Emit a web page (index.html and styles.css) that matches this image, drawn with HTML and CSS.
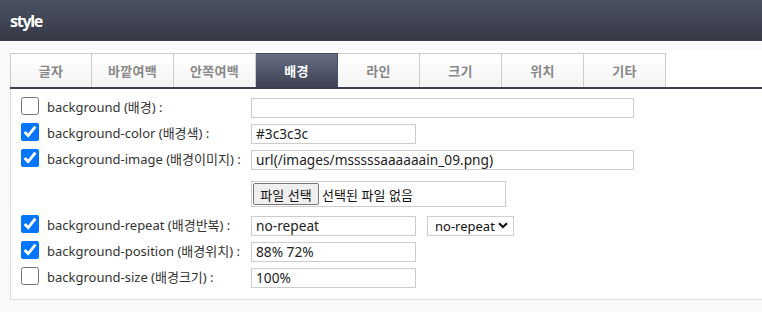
FILE: index.html
```html
<!DOCTYPE html>
<html lang="ko">
<head>
    <meta charset="UTF-8">
    <meta name="viewport" content="width=device-width, initial-scale=1.0">
    <title>style</title>
    <link rel="stylesheet" href="styles.css">
</head>
<body>
    <header class="top">
        <h1>style</h1>
    </header>

    <div class="wrap">
        <div class="box">
            <ul class="tabs">
                <li>글자</li>
                <li>바깥여백</li>
                <li>안쪽여백</li>
                <li class="on">배경</li>
                <li>라인</li>
                <li>크기</li>
                <li>위치</li>
                <li>기타</li>
            </ul>

            <div class="panel">
                <div class="row">
                    <label class="name"><input type="checkbox"> background (배경) :</label>
                    <input type="text" class="field long" value="">
                </div>
                <div class="row">
                    <label class="name"><input type="checkbox" checked> background-color (배경색) :</label>
                    <input type="text" class="field" value="#3c3c3c">
                </div>
                <div class="row">
                    <label class="name"><input type="checkbox" checked> background-image (배경이미지) :</label>
                    <input type="text" class="field long" value="url(/images/msssssaaaaaain_09.png)">
                </div>
                <div class="row file-row">
                    <span></span>
                    <div class="file">
                        <span class="file-btn">파일 선택</span>
                        <span class="file-name">선택된 파일 없음</span>
                    </div>
                </div>
                <div class="row">
                    <label class="name"><input type="checkbox" checked> background-repeat (배경반복) :</label>
                    <div class="pair">
                        <input type="text" class="field" value="no-repeat">
                        <div class="select">
                            <span>no-repeat</span>
                            <svg width="10" height="7" viewBox="0 0 10 7"><path d="M1 1.2 L5 5 L9 1.2" fill="none" stroke="#111" stroke-width="2.2"/></svg>
                        </div>
                    </div>
                </div>
                <div class="row">
                    <label class="name"><input type="checkbox" checked> background-position (배경위치) :</label>
                    <input type="text" class="field" value="88% 72%">
                </div>
                <div class="row">
                    <label class="name"><input type="checkbox"> background-size (배경크기) :</label>
                    <input type="text" class="field" value="100%">
                </div>
            </div>
        </div>
    </div>
</body>
</html>
```

FILE: styles.css
```css
body {
    margin: 0;
    padding: 0;
    background-color: #f9f9f9;
    font-family: "Noto Sans", "Noto Sans CJK KR", sans-serif;
    font-size: 13px;
    color: #333;
}

.top {
    height: 41px;
    background: linear-gradient(#4b5060, #363a47);
    display: flex;
    align-items: center;
    padding: 0 10px;
    box-sizing: border-box;
}

.top h1 {
    margin: 0;
    color: #fff;
    font-size: 16px;
    font-weight: bold;
    letter-spacing: -1.3px;
    line-height: 1;
}

.wrap {
    padding: 9px 0 0 10px;
}

.box {
    background: #fff;
    padding-top: 3px;
}

.tabs {
    list-style: none;
    margin: 0;
    padding: 0;
    display: flex;
    border-bottom: 2px solid #3c4050;
}

.tabs li {
    width: 82px;
    height: 34px;
    box-sizing: border-box;
    border: 1px solid #ccc;
    border-left: none;
    border-bottom: none;
    background: linear-gradient(#fff, #f4f4f4);
    color: #888;
    font-family: "Noto Sans CJK KR", sans-serif;
    font-weight: bold;
    font-size: 13px;
    letter-spacing: 0.3px;
    display: flex;
    align-items: center;
    justify-content: center;
}

.tabs li:first-child {
    border-left: 1px solid #ccc;
}

.tabs li.on {
    background: linear-gradient(#676d83, #3d4152);
    border-color: #4a4f60;
    color: #fff;
}

.panel {
    border-left: 1px solid #ddd;
    border-bottom: 1px solid #ddd;
    padding: 4px 0 10px 10px;
}

.row {
    display: grid;
    grid-template-columns: 230px auto;
    align-items: center;
    height: 26px;
}

.name {
    display: flex;
    align-items: center;
    gap: 8px;
    white-space: nowrap;
}

.name input {
    width: 18px;
    height: 18px;
    margin: 0;
    accent-color: #0075ff;
}

.field {
    width: 165px;
    height: 20px;
    box-sizing: border-box;
    margin: 3px 0 0;
    padding: 0 4px;
    border: 1px solid #ccc;
    font-family: "Noto Sans", "Noto Sans CJK KR", sans-serif;
    font-size: 13.7px;
    color: #222;
    outline: none;
}

.field.long {
    width: 383px;
}

.file-row {
    height: 40px;
    align-items: start;
}

.file {
    margin-top: 10px;
    width: 255px;
    height: 26px;
    box-sizing: border-box;
    border: 1px solid #ccc;
    padding: 1px;
    display: flex;
    align-items: center;
    gap: 3px;
    font-family: "Noto Sans CJK KR", sans-serif;
    color: #111;
}

.file-btn {
    width: 66px;
    height: 22px;
    box-sizing: border-box;
    border: 1px solid #767676;
    border-radius: 2px;
    background: #efefef;
    display: flex;
    align-items: center;
    justify-content: center;
}

.pair {
    display: flex;
    align-items: center;
    gap: 11px;
}

.select {
    width: 87px;
    height: 20px;
    box-sizing: border-box;
    margin-top: 3px;
    border: 1px solid #ccc;
    padding: 0 5px 0 7px;
    display: flex;
    align-items: center;
    justify-content: space-between;
    color: #111;
}
```
